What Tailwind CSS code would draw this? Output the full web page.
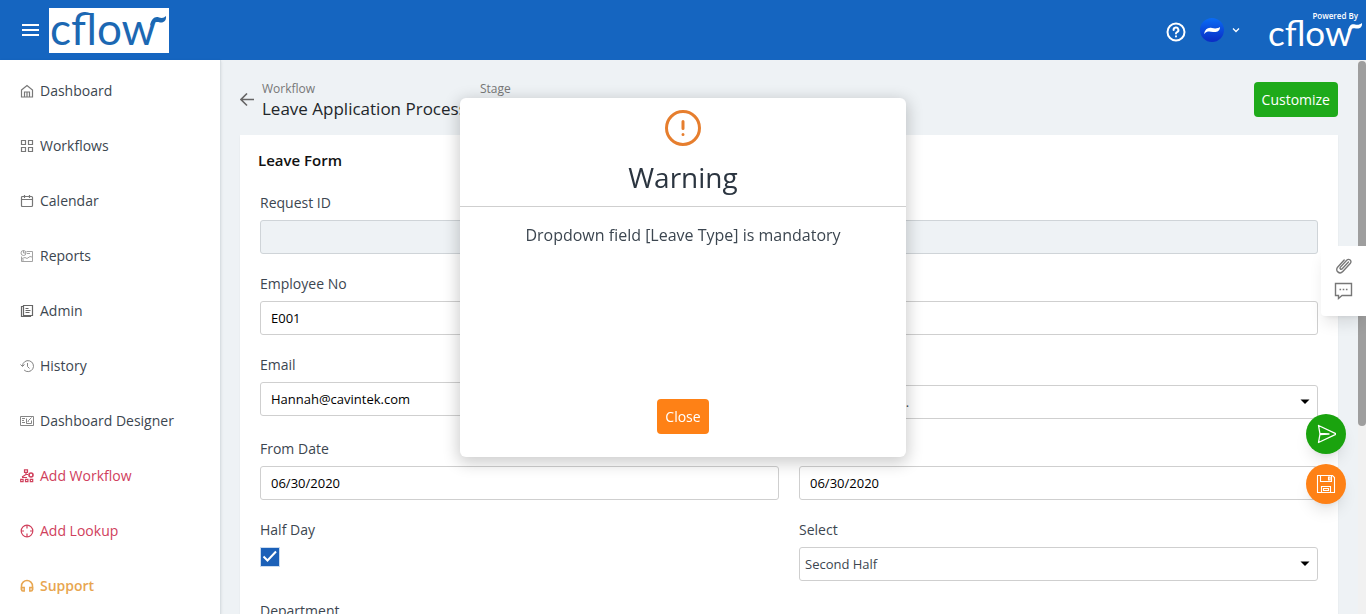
<!DOCTYPE html>
<html lang="en">
<head>
  <meta charset="UTF-8" />
  <meta name="viewport" content="width=device-width, initial-scale=1.0" />
  <title>Leave Application Process - Cflow</title>
  <script src="https://cdn.jsdelivr.net/npm/@tailwindcss/browser@4"></script>
</head>
<body class="h-screen flex flex-col overflow-hidden bg-[#eef2f5] font-['Open_Sans',sans-serif] text-sm text-[#3c4650]">

  <!-- Top bar -->
  <header class="h-15 shrink-0 flex items-center justify-between bg-[#1565c0] pl-5 pr-1 text-white">
    <div class="flex items-center gap-[9px]">
      <button type="button" aria-label="Menu" class="w-5">
        <svg class="w-5 h-4" viewBox="0 0 20 16" fill="none" stroke="currentColor" stroke-width="2"><path d="M2 3h17M2 8h17M2 13h17" /></svg>
      </button>
      <a href="#" aria-label="Cflow home" class="block bg-white text-[#1c68b3]">
        <svg class="w-30 h-[45px] overflow-visible" viewBox="0 0 120 45" fill="currentColor">
          <text x="1" y="37" font-family="Lato, sans-serif" font-size="44">cflow</text>
          <path d="M101 18C102 11 106 8 110 9.500C113 10.500 115 10 117 8C117.500 12.500 115 15 111 14.500C107 13.500 104 14 101 18z" />
        </svg>
      </a>
    </div>
    <div class="flex items-center">
      <button type="button" aria-label="Help" class="mr-3.5 pt-1">
        <svg class="size-5" viewBox="0 0 20 20" fill="none" stroke="currentColor" stroke-width="2" stroke-linecap="round"><circle cx="10" cy="10" r="8.500" /><path d="M7.600 8a2.400 2.400 0 1 1 3.500 2.100c-.8.4-1.100.8-1.100 1.500M10 14.300v.1" /></svg>
      </button>
      <button type="button" aria-label="Account" class="flex items-center gap-2 mr-[26px]">
        <svg class="size-6" viewBox="0 0 24 24">
          <defs><linearGradient id="avatar" x1="0" y1="0" x2="0" y2="1"><stop offset="0" stop-color="#0a6cf5" /><stop offset="1" stop-color="#0a2bc4" /></linearGradient></defs>
          <circle cx="12" cy="12" r="12" fill="url(#avatar)" />
          <path d="M4 16C5 11 8 9 12 10C15 10.800 18 10.500 20 9C20 13 17 14.500 13 14C9 13.300 7 13 4 16z" fill="#fff" />
        </svg>
        <svg class="size-2" viewBox="0 0 8 8" fill="none" stroke="currentColor" stroke-width="1.300"><path d="M1 2.500 4 5.500 7 2.500" /></svg>
      </button>
      <div class="flex flex-col items-end">
        <span class="text-[8px] leading-[10px] font-semibold pr-1">Powered By</span>
        <svg class="w-24 h-7 overflow-visible" viewBox="0 0 96 28" fill="currentColor" role="img" aria-label="Cflow">
          <text x="2" y="25" font-family="Lato, sans-serif" font-size="35">cflow</text>
          <path d="M82 10C83 4 86 2.500 89 3.500C92 4.200 94 3.500 96 2C96.500 6 94 8 90 7.500C87 7 85 7 82 10z" />
        </svg>
      </div>
    </div>
  </header>

  <div class="flex flex-1 min-h-0">
    <!-- Sidebar -->
    <nav class="w-[221px] shrink-0 overflow-hidden bg-white border-r border-[#d9dfe3] shadow-sm pt-[3px]">
      <a href="#" class="flex items-center gap-1.5 h-[55px] pl-5">
        <svg class="size-3.5 text-[#777]" viewBox="0 0 14 14" fill="none" stroke="currentColor" stroke-width="1.200"><path d="M1.500 6 7 1.500 12.500 6v7h-11zM4.500 13V8h5v5M7 8v5" /></svg>
        Dashboard
      </a>
      <a href="#" class="flex items-center gap-1.5 h-[55px] pl-5">
        <svg class="size-3.5 text-[#777]" viewBox="0 0 14 14" fill="none" stroke="currentColor" stroke-width="1.200"><path d="M1.500 1.500h4v4h-4zM8.500 1.500h4v4h-4zM1.500 8.500h4v4h-4zM8.500 8.500h4v4h-4z" /></svg>
        Workflows
      </a>
      <a href="#" class="flex items-center gap-1.5 h-[55px] pl-5">
        <svg class="size-3.5 text-[#777]" viewBox="0 0 14 14" fill="none" stroke="currentColor" stroke-width="1.200"><path d="M1.500 3.500q0-1 1-1h9q1 0 1 1v8q0 1-1 1h-9q-1 0-1-1zM1.500 5.500h11M4.500 1v3M9.500 1v3" /></svg>
        Calendar
      </a>
      <a href="#" class="flex items-center gap-1.5 h-[55px] pl-5">
        <svg class="size-3.5 text-[#999]" viewBox="0 0 14 14" fill="none" stroke="currentColor" stroke-width=".9"><path d="M6.500 2.500h6v10h-11v-5M2 9.500l3-1 2 1 3-2 2 .5M2 11h2M7 4.500h3" /><circle cx="3.500" cy="4" r="2.500" /><path d="M3.500 1.500V4H6" /></svg>
        Reports
      </a>
      <a href="#" class="flex items-center gap-1.5 h-[55px] pl-5">
        <svg class="size-3.5 text-[#666]" viewBox="0 0 14 14" fill="none" stroke="currentColor" stroke-width="1.200"><path d="M3.500 1.500h9v10h-9zM3.500 2.500h-2v10h9v-1M5.500 4.500h3M5.500 6.500h5M5.500 8.500h4" /></svg>
        Admin
      </a>
      <a href="#" class="flex items-center gap-1.5 h-[55px] pl-5">
        <svg class="size-3.5 text-[#777]" viewBox="0 0 14 14" fill="none" stroke="currentColor" stroke-width=".9"><path d="M2.500 7a5.500 5.500 0 1 1 1.600 4M.5 5.500l2 2 2-2M7.500 4v3.500l2 2" /></svg>
        History
      </a>
      <a href="#" class="flex items-center gap-1.5 h-[55px] pl-5">
        <svg class="size-3.5 text-[#777]" viewBox="0 0 14 14" fill="none" stroke="currentColor" stroke-width=".9"><path d="M.5 2.500h13v9H.5zM2 4.500h3M2 6.500h2M2 8.500h3M6.500 4.500v5h5v-3M8 8l.5-1.500 3-3" /></svg>
        Dashboard Designer
      </a>
      <a href="#" class="flex items-center gap-1.5 h-[55px] pl-5 text-[#d0405c]">
        <svg class="size-3.5" viewBox="0 0 14 14" fill="none" stroke="currentColor" stroke-width="1.200"><path d="M4.500.8h3v2.500h-3zM6 3.500v2L2 8M6 5.500h2M.7 10.300h2.400v2.400H.7zM5.500 10.300h2.400v2.400H5.500zM10.300 10.300h2.400v2.400h-2.400zM2 8.500h5" /><circle cx="11" cy="6" r="2" stroke-width="1.600" /></svg>
        Add Workflow
      </a>
      <a href="#" class="flex items-center gap-1.5 h-[55px] pl-5 text-[#d0405c]">
        <svg class="size-3.5" viewBox="0 0 14 14" fill="none" stroke="currentColor" stroke-width="1.200"><circle cx="7" cy="7" r="5.800" /><path d="M7 1v3.500M7 9.500V13M1 7h3M10 7h3" /></svg>
        Add Lookup
      </a>
      <a href="#" class="flex items-center gap-1.5 h-[55px] pl-5 font-semibold text-[#e8a650]">
        <svg class="size-3.5" viewBox="0 0 14 14" fill="none" stroke="currentColor" stroke-width="1.500"><path d="M1.500 11V7a5.500 5.500 0 0 1 11 0v4" /><path d="M1.500 8.500h2.700V12H3q-1.500 0-1.500-1.500zM12.500 8.500H9.800V12H11q1.500 0 1.500-1.500z" /></svg>
        Support
      </a>
    </nav>

    <!-- Page -->
    <main class="flex-1 min-w-0 overflow-hidden pl-[19px] pr-5">
      <div class="flex items-center h-[75px] pt-1">
        <button type="button" aria-label="Back" class="mr-2 text-[#666]">
          <svg class="size-3.5" viewBox="0 0 14 14" fill="none" stroke="currentColor" stroke-width="1.600"><path d="M14 6.500H1M7 .5l-6 6 6 6" /></svg>
        </button>
        <dl class="grid grid-cols-[218px_1fr] flex-1">
          <div>
            <dt class="text-xs leading-[18px] text-[#777]">Workflow</dt>
            <dd class="text-[17px] leading-[22px] text-[#22262a] truncate">Leave Application Process</dd>
          </div>
          <div>
            <dt class="text-xs leading-[18px] text-[#777]">Stage</dt>
            <dd class="text-[17px] leading-[22px] text-[#22262a] truncate">Submit</dd>
          </div>
        </dl>
        <button type="button" class="h-[35px] px-2 rounded bg-[#1eaa1a] text-white">Customize</button>
      </div>

      <form class="bg-white px-5 pt-[13px] pb-10 shadow-xs">
        <h1 class="-ml-0.5 mb-[21px] text-[15px] leading-6 font-semibold text-[#111]">Leave Form</h1>
        <div class="grid grid-cols-2 gap-5 items-start">
          <div class="flex flex-col gap-[7px]">
            <label for="requestId" class="leading-5">Request ID</label>
            <input id="requestId" type="text" disabled class="h-[34px] px-2.5 rounded-[3px] border border-[#cfd4d8] bg-[#eef2f5] text-[13px]" />
          </div>
          <div class="flex flex-col gap-[7px]">
            <label for="requestDate" class="leading-5">Request Date</label>
            <input id="requestDate" type="text" disabled class="h-[34px] px-2.5 rounded-[3px] border border-[#cfd4d8] bg-[#eef2f5] text-[13px]" />
          </div>
          <div class="flex flex-col gap-[7px]">
            <label for="employeeNo" class="leading-5">Employee No</label>
            <input id="employeeNo" type="text" value="E001" class="h-[34px] px-2.5 rounded-[3px] border border-[#cfcfcf] text-[13px] text-black" />
          </div>
          <div class="flex flex-col gap-[7px]">
            <label for="employeeName" class="leading-5">Employee Name</label>
            <input id="employeeName" type="text" value="Hannah" class="h-[34px] px-2.5 rounded-[3px] border border-[#cfcfcf] text-[13px] text-black" />
          </div>
          <div class="flex flex-col gap-[7px]">
            <label for="email" class="leading-5">Email</label>
            <input id="email" type="email" value="Hannah@cavintek.com" class="h-[34px] px-2.5 rounded-[3px] border border-[#cfcfcf] text-[13px] text-black" />
          </div>
          <div class="flex flex-col gap-2.5">
            <label for="leaveType" class="leading-5">Leave Type</label>
            <div class="relative">
              <select id="leaveType" class="block w-full h-[34px] px-[5px] rounded-[3px] border border-[#cfcfcf] appearance-none text-[13px]">
                <option>Select an option..</option>
              </select>
              <svg class="absolute right-2 top-3.5 w-2.5 h-1.5 text-black pointer-events-none" viewBox="0 0 10 6" fill="currentColor"><path d="M.5.5h9L5 5z" /></svg>
            </div>
          </div>
          <div class="flex flex-col gap-[7px]">
            <label for="fromDate" class="leading-5">From Date</label>
            <input id="fromDate" type="text" value="06/30/2020" class="h-[34px] px-2.5 rounded-[3px] border border-[#cfcfcf] text-[13px] text-black" />
          </div>
          <div class="flex flex-col gap-[7px]">
            <label for="toDate" class="leading-5">To Date</label>
            <input id="toDate" type="text" value="06/30/2020" class="h-[34px] px-2.5 rounded-[3px] border border-[#cfcfcf] text-[13px] text-black" />
          </div>
          <div class="flex flex-col gap-[7px]">
            <label for="halfDay" class="leading-5">Half Day</label>
            <div class="relative">
              <input id="halfDay" type="checkbox" checked class="block size-5 appearance-none border border-[#cbdcf0] bg-[#1b60b8]" />
              <svg class="absolute left-0 top-0 size-5 text-white pointer-events-none" viewBox="0 0 20 20" fill="none" stroke="currentColor" stroke-width="2"><path d="m3.500 9.500 4 4 8.500-9" /></svg>
            </div>
          </div>
          <div class="flex flex-col gap-[7px]">
            <label for="half" class="leading-5">Select</label>
            <div class="relative">
              <select id="half" class="block w-full h-[34px] px-[5px] rounded-[3px] border border-[#cfcfcf] appearance-none text-[13px]">
                <option>Second Half</option>
                <option>First Half</option>
              </select>
              <svg class="absolute right-2 top-3.5 w-2.5 h-1.5 text-black pointer-events-none" viewBox="0 0 10 6" fill="currentColor"><path d="M.5.5h9L5 5z" /></svg>
            </div>
          </div>
          <div class="flex flex-col gap-[7px]">
            <label for="department" class="leading-5">Department</label>
            <input id="department" type="text" class="h-[34px] px-2.5 rounded-[3px] border border-[#cfcfcf] text-[13px] text-black" />
          </div>
        </div>
      </form>
    </main>

    <!-- Scroll track -->
    <div class="w-2 shrink-0 bg-[#f1f1f1] pt-px">
      <div class="h-[66%] rounded-full bg-[#9e9e9e]"></div>
    </div>
  </div>

  <!-- Attachments and comments -->
  <aside class="fixed right-0 top-[246px] w-[45px] h-[70px] flex flex-col items-center gap-[5px] pt-2.5 rounded-l bg-white shadow-lg text-[#777]">
    <button type="button" aria-label="Attachments">
      <svg class="size-5" viewBox="0 0 20 20" fill="none" stroke="currentColor" stroke-width="1.400" stroke-linecap="round" stroke-linejoin="round"><path d="m14.500 6-6.300 6.800c-1.200 1.300-3-.4-1.800-1.700l6.300-6.800C15 2 18.500 5 16.200 7.500l-7.400 8C5.500 19 .5 14.500 3.800 11l6.400-7" /></svg>
    </button>
    <button type="button" aria-label="Comments">
      <svg class="size-5" viewBox="0 0 20 20" fill="none" stroke="currentColor" stroke-width="1.400"><path d="M1.500 2.500h16v12H8l-3.500 3v-3h-3z" /><path d="M5.500 8.500h1.600M8.700 8.500h1.600M11.900 8.500h1.600" stroke-width="1.600" /></svg>
    </button>
  </aside>

  <!-- Submit and save -->
  <div class="fixed right-5 top-[414px] flex flex-col gap-2.5 text-white">
    <button type="button" aria-label="Submit" class="size-10 flex items-center justify-center rounded-full bg-[#1aa30e] shadow-lg">
      <svg class="size-5" viewBox="0 0 20 20" fill="none" stroke="currentColor" stroke-width="1.300" stroke-linejoin="round"><path d="M2.500 1.500 20.500 10l-18 8.500L4 10zM4 9.500l9 .5-9 .5" /></svg>
    </button>
    <button type="button" aria-label="Save" class="size-10 flex items-center justify-center rounded-full bg-[#fe8116] shadow-lg">
      <svg class="size-5" viewBox="0 0 20 20" fill="none" stroke="currentColor" stroke-width="1.100"><path d="M1.500 1.500h15l2 2v15h-17zM4.500 1.500v6h11v-6M12.500 3h1.500v3h-1.500zM5.500 18.500v-6h9v6M7.500 14.500h5v2h-5z" /></svg>
    </button>
  </div>

  <!-- Warning dialog -->
  <div class="fixed inset-0 flex items-start justify-center pt-[98px] pointer-events-none">
    <section role="alertdialog" aria-labelledby="warningTitle" aria-describedby="warningText" class="w-[446px] flex flex-col items-center rounded-md bg-white text-center pointer-events-auto shadow-[0_4px_16px_2px_rgba(0,0,0,0.2)]">
      <div class="w-full flex flex-col items-center border-b border-[#cfcfcf] pt-3 pb-[9px]">
        <svg class="size-9 text-[#e67e2e]" viewBox="0 0 36 36" fill="none" stroke="currentColor" stroke-width="3" stroke-linecap="round"><circle cx="18" cy="18" r="16.500" /><path d="M18 11.500v7M18 24.500v.1" /></svg>
        <h2 id="warningTitle" class="mt-[11px] text-[28px] leading-10 text-[#2b3540]">Warning</h2>
      </div>
      <p id="warningText" class="mt-4 h-44 text-base leading-6 text-[#3c4650]">Dropdown field [Leave Type] is mandatory</p>
      <button type="button" class="h-[35px] px-2 mb-[23px] rounded bg-[#fe8116] text-white">Close</button>
    </section>
  </div>

</body>
</html>
